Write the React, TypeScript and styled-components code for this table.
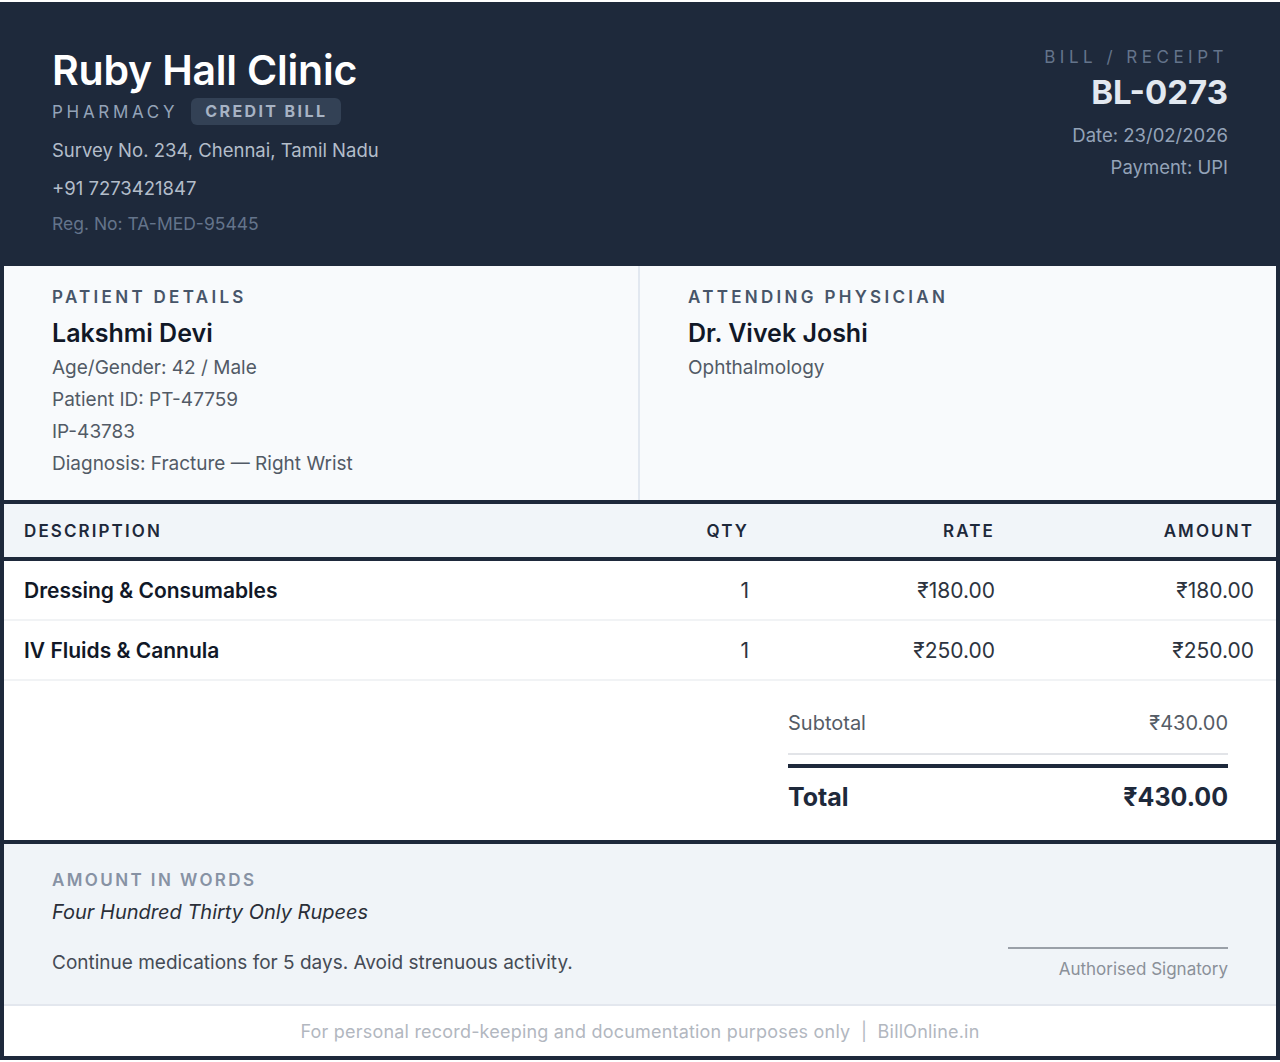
import React from "react";
import styled, { createGlobalStyle } from "styled-components";

const Global = createGlobalStyle`
  html, body { margin: 0; padding: 0; background: #ffffff; }
  body { font-family: Inter, "Noto Sans", "Liberation Sans", sans-serif; }
  * { box-sizing: border-box; }
`;

const Sheet = styled.div`
  margin-top: 2px;
  width: 1280px;
  border: 4px solid #1e293b;
  background: #ffffff;
  display: flex;
  flex-direction: column;
`;

const Header = styled.header`
  background: #1e293b;
  padding: 40px 48px 30px 48px;
  display: flex;
  justify-content: space-between;
  align-items: flex-start;
  height: 260px;
`;

const Brand = styled.div`
  display: flex;
  flex-direction: column;
`;

const ClinicName = styled.h1`
  margin: 0;
  font-size: 41px;
  line-height: 48px;
  font-weight: 600;
  color: #ffffff;
  letter-spacing: -0.2px;
`;

const TagRow = styled.div`
  display: flex;
  align-items: center;
  gap: 13px;
  margin-top: 4px;
`;

const Kicker = styled.span<{ $color?: string; $spacing?: number }>`
  font-size: 17px;
  line-height: 22px;
  letter-spacing: ${(p) => p.$spacing ?? 3.7}px;
  color: ${(p) => p.$color ?? "#94a3b8"};
  text-transform: uppercase;
`;

const Badge = styled.span`
  background: #334155;
  color: #a7b3c4;
  font-size: 16px;
  font-weight: 700;
  letter-spacing: 2.4px;
  padding: 2px 14px;
  line-height: 23px;
  border-radius: 6px;
`;

const HeaderLine = styled.div<{ $color: string; $gap: number; $size?: number }>`
  font-size: ${(p) => p.$size ?? 18.5}px;
  line-height: 24px;
  color: ${(p) => p.$color};
  margin-top: ${(p) => p.$gap}px;
`;

const Meta = styled.div`
  display: flex;
  flex-direction: column;
  align-items: flex-end;
  text-align: right;
`;

const BillNo = styled.div`
  font-size: 33px;
  line-height: 40px;
  font-weight: 700;
  color: #e2e8f0;
  margin-top: 4px;
`;

const MetaLine = styled.div<{ $gap: number }>`
  font-size: 18.5px;
  line-height: 24px;
  color: #94a3b8;
  margin-top: ${(p) => p.$gap}px;
`;

const Parties = styled.section`
  display: grid;
  grid-template-columns: 636px 1fr;
  background: #f8fafc;
  border-bottom: 4px solid #1e293b;
`;

const Party = styled.div<{ $divider?: boolean }>`
  padding: 18px 48px 20px 48px;
  border-right: ${(p) => (p.$divider ? "2px solid #e2e8f0" : "none")};
  display: flex;
  flex-direction: column;
`;

const SectionLabel = styled.div<{ $color?: string; $spacing?: number }>`
  font-size: 17px;
  line-height: 26px;
  font-weight: 600;
  letter-spacing: ${(p) => p.$spacing ?? 3.3}px;
  color: ${(p) => p.$color ?? "#475569"};
  text-transform: uppercase;
`;

const PartyName = styled.div`
  font-size: 25px;
  line-height: 34px;
  font-weight: 600;
  color: #111827;
  margin-top: 6px;
  margin-bottom: 2px;
`;

const PartyLine = styled.div`
  font-size: 19px;
  line-height: 32px;
  color: #525a66;
`;

const TableHead = styled.div`
  display: grid;
  grid-template-columns: 627px 140px 246px 1fr;
  background: #f1f5f9;
  border-bottom: 4px solid #1e293b;
  height: 57px;
  align-items: center;
  padding-top: 1px;
`;

const HeadCell = styled.div<{ $right?: boolean }>`
  font-size: 17px;
  font-weight: 600;
  letter-spacing: 2.1px;
  color: #1e293b;
  text-align: ${(p) => (p.$right ? "right" : "left")};
  padding: 0 22px 0 20px;
`;

const Row = styled.div`
  display: grid;
  grid-template-columns: 627px 140px 246px 1fr;
  height: 60px;
  align-items: center;
  border-bottom: 2px solid #f1f3f5;
`;

const Cell = styled.div<{ $right?: boolean; $strong?: boolean }>`
  font-size: 21px;
  font-weight: ${(p) => (p.$strong ? 600 : 400)};
  color: ${(p) => (p.$strong ? "#111827" : "#2d3440")};
  text-align: ${(p) => (p.$right ? "right" : "left")};
  padding: 0 22px 0 20px;
`;

const TotalsArea = styled.section`
  display: flex;
  justify-content: flex-end;
  padding: 27px 48px 26px 48px;
  border-bottom: 4px solid #1e293b;
`;

const TotalsBox = styled.div`
  width: 440px;
  display: flex;
  flex-direction: column;
`;

const SubRow = styled.div`
  display: flex;
  justify-content: space-between;
  font-size: 20px;
  line-height: 30px;
  color: #555c66;
  padding-bottom: 15px;
  border-bottom: 2px solid #e2e4e8;
`;

const GrandRow = styled.div`
  display: flex;
  justify-content: space-between;
  margin-top: 9px;
  border-top: 4px solid #1e293b;
  padding-top: 12px;
  font-size: 25px;
  line-height: 34px;
  font-weight: 700;
  color: #1e293b;
`;

const WordsArea = styled.section`
  background: #f0f4f8;
  padding: 23px 48px 23px 48px;
  display: flex;
  justify-content: space-between;
  align-items: flex-end;
  border-bottom: 2px solid #e3e7ee;
`;

const WordsCol = styled.div`
  display: flex;
  flex-direction: column;
  padding-bottom: 4px;
`;

const Words = styled.div`
  font-size: 20px;
  line-height: 28px;
  font-style: italic;
  color: #2a2f38;
  margin-top: 5px;
`;

const Note = styled.div`
  font-size: 19px;
  line-height: 28px;
  color: #454b55;
  margin-top: 23px;
`;

const Signature = styled.div`
  width: 220px;
  border-top: 2px solid #9aa0a8;
  padding-top: 8px;
  text-align: right;
  font-size: 17px;
  line-height: 24px;
  color: #8a9099;
`;

const Footer = styled.footer`
  height: 50px;
  display: flex;
  align-items: center;
  justify-content: center;
  font-size: 18px;
  color: #b2b7bf;
  letter-spacing: 0.2px;
`;

const items = [
  { desc: "Dressing & Consumables", qty: 1, rate: "₹180.00", amount: "₹180.00" },
  { desc: "IV Fluids & Cannula", qty: 1, rate: "₹250.00", amount: "₹250.00" },
];

export default function App() {
  return (
    <>
      <Global />
      <Sheet>
        <Header>
          <Brand>
            <ClinicName>Ruby Hall Clinic</ClinicName>
            <TagRow>
              <Kicker>Pharmacy</Kicker>
              <Badge>CREDIT BILL</Badge>
            </TagRow>
            <HeaderLine $color="#b3bdca" $gap={13}>Survey No. 234, Chennai, Tamil Nadu</HeaderLine>
            <HeaderLine $color="#b3bdca" $gap={14}>+91 7273421847</HeaderLine>
            <HeaderLine $color="#64748b" $gap={12} $size={17.5}>Reg. No: TA-MED-95445</HeaderLine>
          </Brand>
          <Meta>
            <Kicker $color="#64748b" $spacing={4.5}>Bill / Receipt</Kicker>
            <BillNo>BL-0273</BillNo>
            <MetaLine $gap={11}>Date: 23/02/2026</MetaLine>
            <MetaLine $gap={8}>Payment: UPI</MetaLine>
          </Meta>
        </Header>

        <Parties>
          <Party $divider>
            <SectionLabel>Patient Details</SectionLabel>
            <PartyName>Lakshmi Devi</PartyName>
            <PartyLine>Age/Gender: 42 / Male</PartyLine>
            <PartyLine>Patient ID: PT-47759</PartyLine>
            <PartyLine>IP-43783</PartyLine>
            <PartyLine>Diagnosis: Fracture — Right Wrist</PartyLine>
          </Party>
          <Party>
            <SectionLabel>Attending Physician</SectionLabel>
            <PartyName>Dr. Vivek Joshi</PartyName>
            <PartyLine>Ophthalmology</PartyLine>
          </Party>
        </Parties>

        <TableHead>
          <HeadCell>DESCRIPTION</HeadCell>
          <HeadCell $right>QTY</HeadCell>
          <HeadCell $right>RATE</HeadCell>
          <HeadCell $right>AMOUNT</HeadCell>
        </TableHead>
        {items.map((it) => (
          <Row key={it.desc}>
            <Cell $strong>{it.desc}</Cell>
            <Cell $right>{it.qty}</Cell>
            <Cell $right>{it.rate}</Cell>
            <Cell $right>{it.amount}</Cell>
          </Row>
        ))}

        <TotalsArea>
          <TotalsBox>
            <SubRow>
              <span>Subtotal</span>
              <span>₹430.00</span>
            </SubRow>
            <GrandRow>
              <span>Total</span>
              <span>₹430.00</span>
            </GrandRow>
          </TotalsBox>
        </TotalsArea>

        <WordsArea>
          <WordsCol>
            <SectionLabel $color="#8792a4" $spacing={2.4}>Amount in Words</SectionLabel>
            <Words>Four Hundred Thirty Only Rupees</Words>
            <Note>Continue medications for 5 days. Avoid strenuous activity.</Note>
          </WordsCol>
          <Signature>Authorised Signatory</Signature>
        </WordsArea>

        <Footer>For personal record-keeping and documentation purposes only&nbsp;&nbsp;|&nbsp;&nbsp;BillOnline.in</Footer>
      </Sheet>
    </>
  );
}
